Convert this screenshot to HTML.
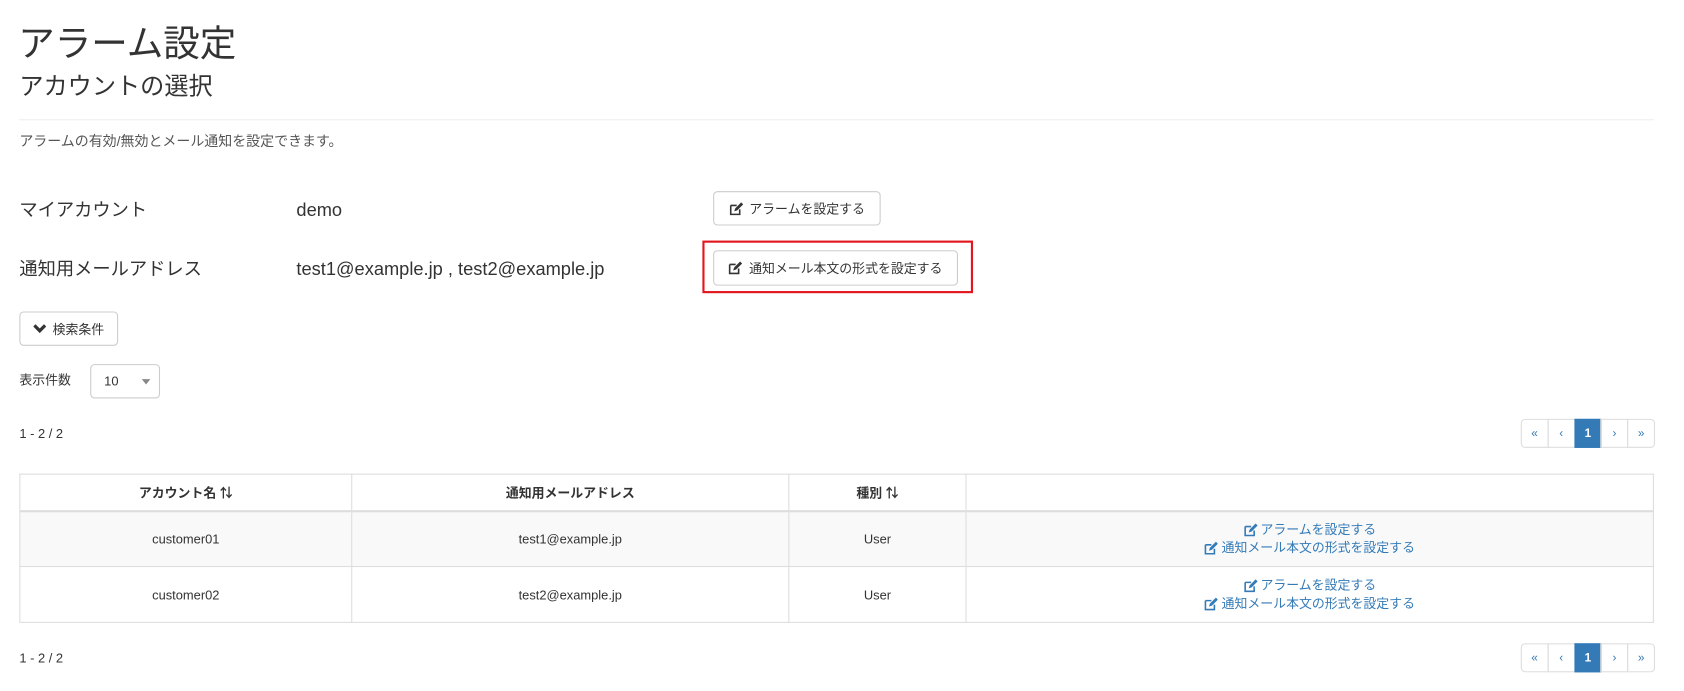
<!DOCTYPE html>
<html><head><meta charset="utf-8"><style>
*{box-sizing:border-box;margin:0;padding:0}
body{width:1684px;height:690px;background:#fff;font-family:"Liberation Sans","Noto Sans CJK JP",sans-serif;color:#333;position:relative;overflow:hidden}
#w{position:absolute;left:0;top:0;width:1568px;height:643px;transform:scale(1.07398);transform-origin:0 0}
.a{position:absolute;white-space:nowrap}
.btn{position:absolute;border:1px solid #ccc;border-radius:4px;background:#fff;font-size:12px;color:#333;display:flex;align-items:center;justify-content:center}
.ic{display:inline-block;vertical-align:middle;margin-right:6px}
table{position:absolute;left:18px;top:441px;width:1522px;border-collapse:collapse;font-size:12px}
td,th{border:1px solid #ddd;text-align:center;vertical-align:middle}
th{height:34px;font-weight:bold;border-bottom:2px solid #ddd}
td{height:52px}
tr.s td{background:#f9f9f9}
.lk{color:#337ab7;line-height:17px}
.pg{position:absolute;display:flex;height:27px}
.pg div{width:25.8px;height:27px;border:1px solid #ddd;margin-left:-1px;font-size:11px;color:#337ab7;display:flex;align-items:center;justify-content:center}
.pg div:first-child{border-radius:4px 0 0 4px;margin-left:0}
.pg div:last-child{border-radius:0 4px 4px 0}
.pg .on{background:#337ab7;border-color:#337ab7;color:#fff;font-weight:bold}
</style></head><body>
<svg width="0" height="0" style="position:absolute"><defs><symbol id="ed" viewBox="0 0 14 14"><path d="M1.5 3.5h6M1.5 3.5v9h9v-5" fill="none" stroke="currentColor" stroke-width="1.6"/><path d="M5 9.5l1-3 6-6 2 2-6 6z" fill="currentColor"/></symbol></defs></svg>
<div id="w">
<div class="a" style="left:17px;top:19px;font-size:34px;line-height:44px">アラーム設定</div>
<div class="a" style="left:18px;top:65px;font-size:22.5px;line-height:32px">アカウントの選択</div>
<div class="a" style="left:18px;top:111px;width:1522px;height:1px;background:#eee"></div>
<div class="a" style="left:18px;top:123px;font-size:13px;color:#555;line-height:18px">アラームの有効/無効とメール通知を設定できます。</div>
<div class="a" style="left:18px;top:184px;font-size:17px;line-height:24px">マイアカウント</div>
<div class="a" style="left:276px;top:184px;font-size:17px;line-height:24px">demo</div>
<div class="btn" style="left:664px;top:178px;width:156px;height:32px"><svg class="ic" width="13" height="13"><use href="#ed"/></svg>アラームを設定する</div>
<div class="a" style="left:18px;top:239px;font-size:17px;line-height:24px">通知用メールアドレス</div>
<div class="a" style="left:276px;top:239px;font-size:17px;line-height:24px">test1@example.jp , test2@example.jp</div>
<div class="a" style="left:654px;top:224px;width:252px;height:49px;border:2px solid #e2161d"></div>
<div class="btn" style="left:664px;top:233px;width:228px;height:33px"><svg class="ic" width="13" height="13"><use href="#ed"/></svg>通知メール本文の形式を設定する</div>
<div class="btn" style="left:18px;top:290px;width:92px;height:32px"><svg class="ic" width="12" height="10" viewBox="0 0 12 10"><path d="M1 2l5 5 5-5" fill="none" stroke="#333" stroke-width="3"/></svg>検索条件</div>
<div class="a" style="left:18px;top:346px;font-size:12px;line-height:16px">表示件数</div>
<div class="a" style="left:84px;top:339px;width:65px;height:32px;border:1px solid #ccc;border-radius:4px;font-size:12px;padding:8px 0 0 12px">10<span style="position:absolute;right:8px;top:13px;border:4px solid transparent;border-top:5px solid #888"></span></div>
<div class="a" style="left:18px;top:397px;font-size:12px">1 - 2 / 2</div>
<div class="pg" style="left:1416px;top:390px"><div>«</div><div>‹</div><div class="on">1</div><div>›</div><div>»</div></div>
<table>
<tr><th style="width:309px">アカウント名 ⇅</th><th style="width:407px">通知用メールアドレス</th><th style="width:165px">種別 ⇅</th><th></th></tr>
<tr class="s"><td>customer01</td><td>test1@example.jp</td><td>User</td><td class="lk"><svg class="ic" style="margin-right:3px" width="13" height="13"><use href="#ed"/></svg>アラームを設定する<br><svg class="ic" style="margin-right:3px" width="13" height="13"><use href="#ed"/></svg>通知メール本文の形式を設定する</td></tr>
<tr><td>customer02</td><td>test2@example.jp</td><td>User</td><td class="lk"><svg class="ic" style="margin-right:3px" width="13" height="13"><use href="#ed"/></svg>アラームを設定する<br><svg class="ic" style="margin-right:3px" width="13" height="13"><use href="#ed"/></svg>通知メール本文の形式を設定する</td></tr>
</table>
<div class="a" style="left:18px;top:606px;font-size:12px">1 - 2 / 2</div>
<div class="pg" style="left:1416px;top:599px"><div>«</div><div>‹</div><div class="on">1</div><div>›</div><div>»</div></div>
</div>
</body></html>
